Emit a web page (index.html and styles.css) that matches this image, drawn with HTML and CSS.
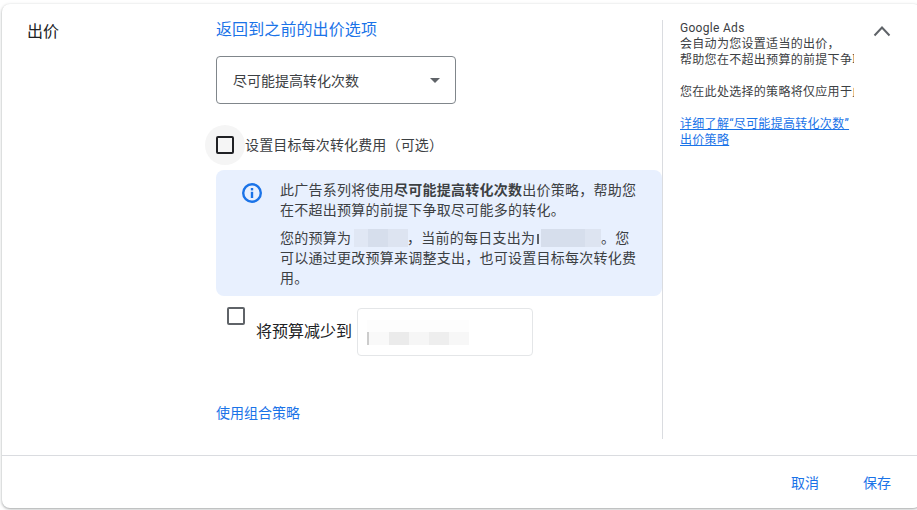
FILE: index.html
```html
<!DOCTYPE html>
<html lang="zh-CN">
<head>
<meta charset="utf-8">
<title>出价</title>
<link rel="stylesheet" href="styles.css">
</head>
<body>
<div class="card">
  <div class="main">
    <div class="title">出价</div>
    <div class="content">
      <a class="back">返回到之前的出价选项</a>
      <div class="select">
        <span>尽可能提高转化次数</span>
        <span class="caret"></span>
      </div>
      <div class="target">
        <span class="halo"><span class="box dark"></span></span>
        <span class="target-label">设置目标每次转化费用（可选）</span>
      </div>
      <div class="notice">
        <svg class="info" viewBox="0 0 24 24" width="24" height="24"><circle cx="12" cy="12" r="8.8" fill="none" stroke="#1a73e8" stroke-width="2.4"/><rect x="10.8" y="7" width="2.4" height="2.4" fill="#1a73e8"/><rect x="10.8" y="10.8" width="2.4" height="6.2" fill="#1a73e8"/></svg>
        <div class="notice-text">
          <p>此广告系列将使用<b>尽可能提高转化次数</b>出价策略，帮助您在不超出预算的前提下争取尽可能多的转化。</p>
          <p>您的预算为 <span class="mask m1"></span>，当前的每日支出为 <span class="tick"></span><span class="mask m2"></span>。您可以通过更改预算来调整支出，也可设置目标每次转化费用。</p>
        </div>
      </div>
      <div class="reduce">
        <span class="box grey"></span>
        <span class="reduce-label">将预算减少到</span>
        <div class="input"><span class="blur"></span></div>
      </div>
      <a class="portfolio">使用组合策略</a>
    </div>
    <div class="side">
      <div class="side-text">
        <div>Google Ads</div>
        <div>会自动为您设置适当的出价，</div>
        <div>帮助您在不超出预算的前提下争取尽可能多的转化。</div>
        <div class="gap">您在此处选择的策略将仅应用于此广告系列。</div>
        <a class="learn">详细了解“尽可能提高转化次数”<br>出价策略</a>
      </div>
      <svg class="chevron" viewBox="0 0 18 12" width="18" height="12"><path d="M1.5 10.5 9 2.5l7.5 8" fill="none" stroke="#5f6368" stroke-width="2"/></svg>
    </div>
  </div>
  <div class="footer">
    <a>取消</a>
    <a>保存</a>
  </div>
</div>
</body>
</html>
```
FILE: styles.css
```css
* { box-sizing: border-box; }
html, body { height: 100%; }
body {
  margin: 0;
  background: #fff;
  font-family: Roboto, "Noto Sans CJK SC", sans-serif;
  color: #3c4043;
  font-size: 14px;
  padding: 4px 0 2px 2px;
  overflow: hidden;
}
.card {
  height: 504px;
  margin-right: -4px;
  background: #fff;
  border-radius: 8px;
  box-shadow: 0 1px 2px rgba(60,64,67,.3), 0 1px 3px 1px rgba(60,64,67,.15);
  display: flex;
  flex-direction: column;
}
.main {
  height: 451px;
  display: flex;
  padding: 16px 0 16px 25px;
}
.title {
  width: 189px;
  font-size: 16px;
  line-height: 22px;
  margin-top: 1px;
  color: #202124;
}
.content {
  width: 446px;
  display: flex;
  flex-direction: column;
  align-items: flex-start;
}
.back {
  color: #1a73e8;
  font-size: 16px;
  line-height: 20px;
  letter-spacing: .1px;
}
.select {
  width: 240px;
  height: 48px;
  margin-top: 16px;
  padding: 0 15px 0 16px;
  border: 1px solid #80868b;
  border-radius: 4px;
  display: flex;
  align-items: center;
  justify-content: space-between;
}
.caret {
  width: 0; height: 0;
  border-left: 5px solid transparent;
  border-right: 5px solid transparent;
  border-top: 5px solid #5f6368;
}
.target {
  display: flex;
  align-items: center;
  margin: 21px 0 0 -11px;
}
.halo {
  width: 40px; height: 40px;
  border-radius: 50%;
  background: #f5f5f5;
  display: flex;
  align-items: center;
  justify-content: center;
}
.box {
  display: block;
  width: 18px; height: 18px;
  border-radius: 2px;
  flex: none;
}
.box.dark { border: 2px solid #202124; }
.box.grey { border: 2px solid #5f6368; }
.target-label { line-height: 20px; letter-spacing: .15px; }
.notice {
  width: 446px;
  height: 126px;
  margin-top: 5px;
  padding: 10px 0 0 24px;
  background: #e8f0fe;
  border-radius: 8px;
  display: flex;
}
.info { flex: none; margin-top: 1px; }
.notice-text { width: 360px; margin-left: 16px; line-height: 20px; letter-spacing: .25px; }
.notice-text p { margin: 0 0 8px; }
.notice-text b { font-weight: 700; color: #3c4043; }
.mask {
  display: inline-block;
  height: 18px;
  vertical-align: -4px;
}
.m1 {
  width: 54px;
  margin: 0 -1px 0 -1px;
  background: linear-gradient(90deg, #e0e7f4 0 14px, #d6deec 14px 34px, #dde4f1 34px);
}
.m2 {
  width: 60px;
  background: linear-gradient(90deg, #d6deec 0 44px, #dde4f1 44px);
}
.tick {
  display: inline-block;
  width: 2px;
  height: 10px;
  margin: 0 2px 0 -2px;
  background: #5f6368;
  vertical-align: -1px;
}
.reduce {
  display: flex;
  margin: 11px 0 0 11px;
}
.reduce-label {
  font-size: 16px;
  line-height: 22px;
  color: #202124;
  margin: 14px 5px 0 11px;
}
.input {
  width: 176px;
  height: 48px;
  margin-top: 1px;
  border: 1px solid #e4e6e8;
  border-radius: 4px;
  padding: 11px 0 0 9px;
}
.blur {
  display: block;
  width: 102px;
  height: 25px;
  background:
    linear-gradient(90deg, #ccc 0 2px, #f9f9f9 2px 22px, #ebebeb 22px 42px, #f6f6f6 42px 62px, #eeeeee 62px 82px, #f7f7f7 82px) bottom / 100% 13px no-repeat,
    #fdfdfd;
}
.portfolio {
  color: #1a73e8;
  line-height: 20px;
  margin-top: 47px;
}
.side {
  flex: 1;
  display: flex;
  border-left: 1px solid #dadce0;
  padding-left: 17px;
}
.side-text {
  width: 174px;
  overflow: hidden;
  white-space: nowrap;
  font-size: 12px;
  line-height: 16px;
  letter-spacing: .3px;
}
.gap { margin: 16px 0; }
.learn { color: #1a73e8; text-decoration: underline; }
.chevron { margin: 5px 0 0 19px; flex: none; }
.footer {
  flex: 1;
  border-top: 1px solid #dadce0;
  display: flex;
  justify-content: flex-end;
  align-items: center;
  gap: 44px;
  padding: 0 30px 0 0;
  color: #1a73e8;
}
```
